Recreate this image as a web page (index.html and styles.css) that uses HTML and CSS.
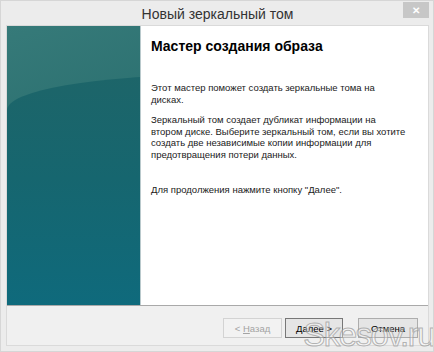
FILE: index.html
```html
<!DOCTYPE html>
<html>
<head>
<meta charset="UTF-8">
<title>Новый зеркальный том</title>
<link rel="stylesheet" href="styles.css">
</head>
<body>

<div class="window">
  <div class="titlebar">
    <span class="title">Новый зеркальный том</span>
    <span class="close">&#x2715;</span>
  </div>

  <div class="client">
    <div class="main">
      <div class="banner"></div>
      <div class="page">
        <h1>Мастер создания образа</h1>
        <p class="first">Этот мастер поможет создать зеркальные тома на<br>дисках.</p>
        <p>Зеркальный том создает дубликат информации на<br>втором диске. Выберите зеркальный том, если вы хотите<br>создать две независимые копии информации для<br>предотвращения потери данных.</p>
        <p class="last">Для продолжения нажмите кнопку "Далее".</p>
      </div>
    </div>

    <div class="buttons">
      <button class="btn disabled">&lt; <u>Н</u>азад</button>
      <button class="btn default"><u>Д</u>алее &gt;</button>
      <button class="btn cancel">Отмена</button>
    </div>
  </div>

  <div class="watermark">Skesov.ru</div>
</div>

</body>
</html>
```

FILE: styles.css
```css
body {
  margin: 0;
  background: #ebebeb;
  font-family: "Liberation Sans", Arial, sans-serif;
}

.window {
  position: relative;
  width: 434px;
  height: 352px;
  box-sizing: border-box;
  border: 1px solid #d6d6d6;
  background: #ececec;
  padding: 0 4px 5px 5px;
  display: flex;
  flex-direction: column;
  overflow: hidden;
}

/* title bar */
.titlebar {
  position: relative;
  height: 24px;
  display: flex;
  align-items: center;
  justify-content: center;
  flex-shrink: 0;
}

.title {
  font-family: "Liberation Sans", Arial, sans-serif;
  font-size: 14px;
  color: #333;
  padding-top: 2px;
}

.close {
  position: absolute;
  top: 1px;
  right: 0;
  width: 26px;
  height: 16px;
  background: #c7c7c7;
  color: #fff;
  font-size: 10px;
  font-weight: bold;
  display: flex;
  align-items: center;
  justify-content: center;
}

/* dialog body */
.client {
  flex: 1;
  display: flex;
  flex-direction: column;
  border: 1px solid #dadada;
  background: #f0f0f0;
}

.main {
  height: 279px;
  display: flex;
  border-bottom: 1px solid #a9a9a9;
  flex-shrink: 0;
}

.banner {
  position: relative;
  width: 133px;
  border-right: 1px solid #b9c9cc;
  background: linear-gradient(160deg, #367a79 0%, #2c7171 40%, #296d6f 100%);
  overflow: hidden;
}

.banner:before {
  content: "";
  position: absolute;
  left: 0;
  top: 49px;
  width: 260px;
  bottom: 0;
  border-top-left-radius: 200px 35px;
  background: linear-gradient(180deg, #1d6569 0%, #16666f 45%, #0f6a7c 100%);
}

.page {
  flex: 1;
  background: #fff;
  padding: 12px 10px 0 10px;
  font-size: 9.5px;
  line-height: 11.5px;
  color: #1a1a1a;
  white-space: nowrap;
}

.page h1 {
  margin: 0;
  font-size: 14px;
  line-height: 17px;
  font-weight: bold;
  color: #000;
}

.page p {
  margin: 9px 0 0 0;
}

.page p.first {
  margin-top: 27px;
}

.page p.last {
  margin-top: 24px;
}

/* buttons */
.buttons {
  flex: 1;
  display: flex;
  justify-content: flex-end;
  align-items: flex-start;
  padding: 12px 10px 0 0;
}

.btn {
  height: 20px;
  padding: 0;
  font-family: "Liberation Sans", Arial, sans-serif;
  font-size: 9.5px;
  color: #000;
  background: #e5e5e5;
  border: 1px solid #adadad;
}

.btn.disabled {
  width: 59px;
  color: #a3a3a3;
  background: #f2f2f2;
  border-color: #d3d3d3;
}

.btn.default {
  width: 58px;
  margin-left: 3px;
  border-color: #777;
}

.btn.cancel {
  width: 60px;
  margin-left: 15px;
}

.watermark {
  position: absolute;
  right: -1px;
  bottom: -3px;
  font-family: "Liberation Sans", Arial, sans-serif;
  font-size: 33px;
  letter-spacing: -1.5px;
  color: rgba(255, 255, 255, 0.35);
  -webkit-text-stroke: 1px rgba(150, 150, 150, 0.7);
}
```
